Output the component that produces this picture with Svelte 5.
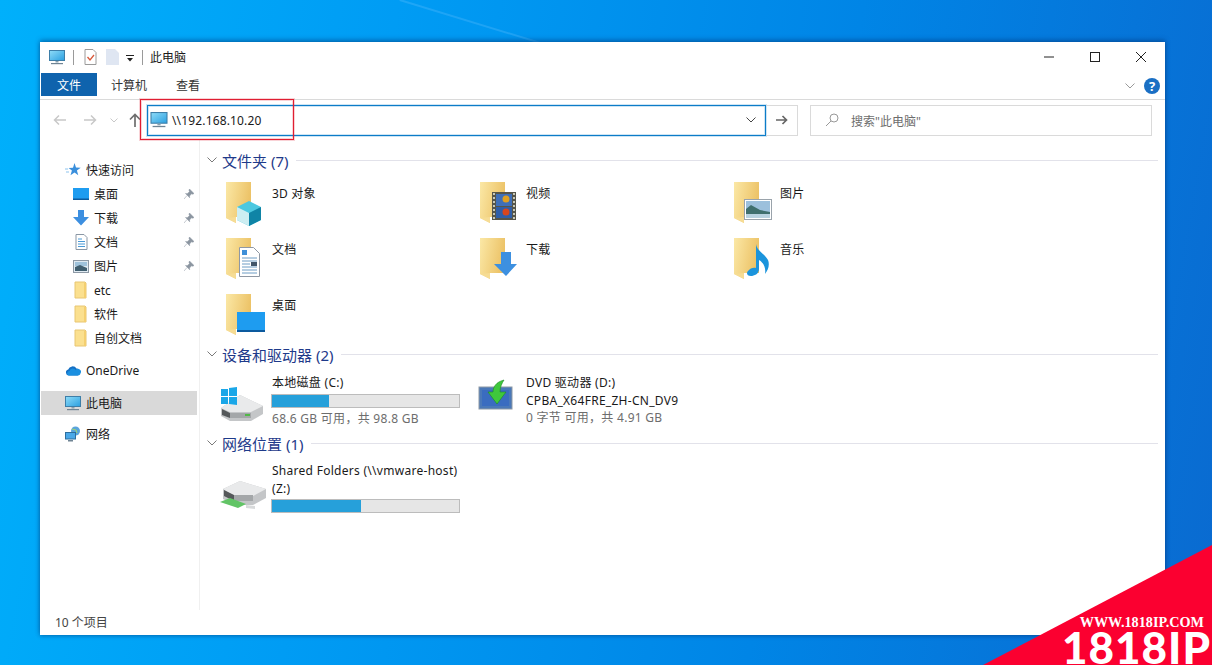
<script>
    const navItems = [
        { label: '快速访问', icon: 'star', cls: 'top' },
        { label: '桌面', icon: 'desk', cls: 'sub', pin: true },
        { label: '下载', icon: 'down', cls: 'sub', pin: true },
        { label: '文档', icon: 'doc', cls: 'sub', pin: true },
        { label: '图片', icon: 'pic', cls: 'sub', pin: true },
        { label: 'etc', icon: 'folder', cls: 'sub' },
        { label: '软件', icon: 'folder', cls: 'sub' },
        { label: '自创文档', icon: 'folder', cls: 'sub' },
        { label: 'OneDrive', icon: 'cloud', cls: 'top gap' },
        { label: '此电脑', icon: 'pc', cls: 'top gap selected' },
        { label: '网络', icon: 'net', cls: 'top gap' }
    ];

    const folders = [
        { label: '3D 对象', overlay: 'cube' },
        { label: '视频', overlay: 'film' },
        { label: '图片', overlay: 'photo' },
        { label: '文档', overlay: 'page' },
        { label: '下载', overlay: 'arrow' },
        { label: '音乐', overlay: 'note' },
        { label: '桌面', overlay: 'screen' }
    ];
</script>

{#snippet monitor(w, h)}
    <svg width={w} height={h} viewBox="0 0 16 15">
        <defs>
            <linearGradient id="scr" x1="0" y1="0" x2="1" y2="1">
                <stop offset="0" stop-color="#8fdcf8" />
                <stop offset="1" stop-color="#2a9fe0" />
            </linearGradient>
        </defs>
        <rect x="0.5" y="0.5" width="15" height="10" fill="url(#scr)" stroke="#3d7ea8" />
        <rect x="6.5" y="11" width="3" height="1.5" fill="#8aa0ae" />
        <rect x="2" y="13" width="12" height="1.2" fill="#6f8494" />
    </svg>
{/snippet}

{#snippet smallFolder()}
    <svg width="16" height="18" viewBox="0 0 16 18">
        <path d="M2 1h10l1 1v15H2z" fill="#fbe08f" stroke="#e8c672" stroke-width="1" />
        <path d="M11 2h2v15h-2z" fill="#f4cf70" />
    </svg>
{/snippet}

{#snippet navIcon(name)}
    {#if name === 'star'}
        <svg width="16" height="16" viewBox="0 0 16 16"><path d="M9.500 1l1.500 4.600 4.700.1-3.800 2.900 1.400 4.700-3.800-2.800-4 2.800 1.400-4.700L3.600 6l4.400-.3z" fill="#3a8fdc" /><path d="M0 7h3M1 10h3" stroke="#8cc3ee" /></svg>
    {:else if name === 'desk'}
        <svg width="16" height="14" viewBox="0 0 16 14"><rect width="16" height="12" y="1" fill="#1e9cf0" /><rect y="11.5" width="16" height="1.500" fill="#0c5a9e" /></svg>
    {:else if name === 'down'}
        <svg width="16" height="16" viewBox="0 0 16 16"><path d="M5 0h6v7h5l-8 8.500L0 7h5z" fill="#3d8fe0" /></svg>
    {:else if name === 'doc'}
        <svg width="13" height="16" viewBox="0 0 13 16"><path d="M1 .5h8l3 3v12H1z" fill="#fff" stroke="#8a97a5" /><path d="M3 5h4M3 7.500h7M3 10h7M3 12.500h7" stroke="#4b9ad6" /></svg>
    {:else if name === 'pic'}
        <svg width="16" height="13" viewBox="0 0 16 13"><rect x=".5" y=".5" width="15" height="12" fill="#dfeaf2" stroke="#8d99a5" /><path d="M2 2h12v4H2z" fill="#9fc3dc" /><path d="M2 7l5-2 7 3v3H2z" fill="#405f70" /></svg>
    {:else if name === 'folder'}
        {@render smallFolder()}
    {:else if name === 'cloud'}
        <svg width="16" height="11" viewBox="0 0 16 11"><path d="M4 10.500a3 3 0 0 1-.8-5.900A4.600 4.600 0 0 1 11.500 3.500 3.600 3.600 0 0 1 12.600 10.500z" fill="#1570c4" /><path d="M3.500 10.500a2.300 2.300 0 0 1 1-4.400 3.400 3.400 0 0 1 6.300-.8 2.700 2.700 0 0 1 4.700 3c0 1.200-1 2.200-2.500 2.200z" fill="#1b8fe0" /></svg>
    {:else if name === 'pc'}
        {@render monitor(16, 15)}
    {:else if name === 'net'}
        <svg width="16" height="16" viewBox="0 0 16 16"><circle cx="10.500" cy="5" r="4.500" fill="#5aa4dc" /><path d="M7 3l4 1 1 3" stroke="#9ed56e" fill="none" /><rect x=".5" y="6.500" width="10" height="6.500" fill="#4aa8e8" stroke="#2d6e9e" /><rect x="3" y="14" width="5" height="1.500" fill="#6f8494" /></svg>
    {/if}
{/snippet}

{#snippet bigFolder(overlay)}
    <svg class="foldericon" width="48" height="48" viewBox="0 0 48 48">
        <defs>
            <linearGradient id="fold" x1="0" y1="0" x2="1" y2="0.300">
                <stop offset="0" stop-color="#fbe8a6" />
                <stop offset="1" stop-color="#ecc266" />
            </linearGradient>
        </defs>
        <path d="M3 3h25v35H13v6L3 39z" fill="url(#fold)" />
        <path d="M3 39l10 5V38z" fill="#f6dc94" />
        {#if overlay === 'cube'}
            <path d="M14 28l12-6 12 6v13l-12 6-12-6z" fill="#4cc8e0" />
            <path d="M14 28l12 6v13l-12-6z" fill="#cdeef2" />
            <path d="M26 34l12-6v13l-12 6z" fill="#0f84a6" />
        {:else if overlay === 'film'}
            <rect x="15" y="13" width="24" height="28" fill="#55554a" />
            <rect x="19" y="15" width="16" height="12" fill="#3f6fb8" />
            <rect x="19" y="28" width="16" height="11" fill="#2f5ea8" />
            <circle cx="29" cy="20" r="3.500" fill="#e0a020" />
            <circle cx="29" cy="33" r="3.500" fill="#d8461e" />
            <path d="M17 14v26M37 14v26" stroke="#c8c8b8" stroke-width="2" stroke-dasharray="2 2" />
        {:else if overlay === 'photo'}
            <rect x="13.500" y="20.500" width="27" height="20" fill="#fff" stroke="#9aa3ab" />
            <rect x="15" y="22" width="24" height="17" fill="#9cc0dc" />
            <path d="M15 30l5-4 9 5 10 2v6H15z" fill="#3f6f6e" />
            <rect x="15" y="35" width="24" height="4" fill="#b8d2e0" />
        {:else if overlay === 'page'}
            <path d="M16.500 12.500h14l6 6v23h-20z" fill="#fff" stroke="#8f98a4" />
            <path d="M19 15h5v5h-5z" fill="#3d8fd8" />
            <path d="M19 23h15M19 26h15M19 29h8M19 32h15M19 35h15M19 38h15" stroke="#6d9cc4" />
            <rect x="28" y="27" width="6" height="4" fill="#42566a" />
        {:else if overlay === 'arrow'}
            <path d="M24 17h10v12h6L29 41 17 29h7z" fill="#3d90e0" />
        {:else if overlay === 'note'}
            <path d="M25 9c1 7 8 9 12 16 2 5 0 10-3 14 1-6-1-11-6-14v9c0 5-5 7-8 7-4 0-5-3-3-5 2-3 6-4 8-3z" fill="#1b94dc" />
        {:else if overlay === 'screen'}
            <rect x="14" y="21" width="28" height="20" fill="#1e9cf0" />
            <rect x="14" y="39" width="28" height="2" fill="#0c5a9e" />
        {/if}
    </svg>
{/snippet}

{#snippet sectionHead(title)}
    <div class="sechead">
        <svg width="10" height="6" viewBox="0 0 10 6"><path d="M.5.500L5 5 9.500.500" fill="none" stroke="#7a7a7a" /></svg>
        <span class="sectitle">{title}</span>
        <span class="secline"></span>
    </div>
{/snippet}

<div class="desktop">
    <div class="beam"></div>

    <div class="window">
        <div class="titlebar">
            <span class="tb-pc">{@render monitor(16, 15)}</span>
            <span class="tsep"></span>
            <svg class="tb-ic" width="13" height="16" viewBox="0 0 13 16"><path d="M1 .5h8l3 3v12H1z" fill="#fff" stroke="#9a9a9a" /><path d="M3.500 8l2.500 3 4-5" fill="none" stroke="#d8583a" stroke-width="1.300" /></svg>
            <svg class="tb-ic2" width="13" height="16" viewBox="0 0 13 16"><path d="M0 0h9l4 4v12H0z" fill="#dfe6f2" /></svg>
            <svg class="tb-dd" width="8" height="7" viewBox="0 0 8 7"><path d="M0 .5h8" stroke="#222" /><path d="M1 3h6L4 6.500z" fill="#222" /></svg>
            <span class="tsep"></span>
            <span class="wintitle">此电脑</span>
            <div class="winbtns">
                <svg width="12" height="12" viewBox="0 0 12 12"><path d="M1 6h10" stroke="#222" /></svg>
                <svg width="12" height="12" viewBox="0 0 12 12"><rect x="1.500" y="1.500" width="9" height="9" fill="none" stroke="#222" /></svg>
                <svg width="12" height="12" viewBox="0 0 12 12"><path d="M1 1l10 10M11 1L1 11" stroke="#222" /></svg>
            </div>
        </div>

        <div class="ribbon">
            <span class="tab file">文件</span>
            <span class="tab">计算机</span>
            <span class="tab view">查看</span>
            <div class="ribright">
                <svg width="10" height="6" viewBox="0 0 10 6"><path d="M.5.500L5 5 9.500.500" fill="none" stroke="#999" /></svg>
                <span class="help">?</span>
            </div>
        </div>

        <div class="addrrow">
            <div class="navbtns">
                <svg width="14" height="12" viewBox="0 0 14 12"><path d="M13 6H2M6 1.500L1.500 6 6 10.500" fill="none" stroke="#c8c8c8" stroke-width="1.500" /></svg>
                <svg width="14" height="12" viewBox="0 0 14 12"><path d="M1 6h11M8 1.500L12.500 6 8 10.500" fill="none" stroke="#c8c8c8" stroke-width="1.500" /></svg>
                <svg width="8" height="5" viewBox="0 0 8 5"><path d="M.5.500L4 4 7.500.500" fill="none" stroke="#c8c8c8" /></svg>
                <svg width="12" height="14" viewBox="0 0 12 14"><path d="M6 14V2M1 6.500L6 1.500l5 5" fill="none" stroke="#6e6e6e" stroke-width="1.700" /></svg>
            </div>
            <div class="addr">
                <span class="addr-pc">{@render monitor(18, 16)}</span>
                <span class="addr-text">\\192.168.10.20</span>
                <svg class="addr-dd" width="10" height="6" viewBox="0 0 10 6"><path d="M.5.500L5 5 9.500.500" fill="none" stroke="#444" /></svg>
            </div>
            <div class="go">
                <svg width="12" height="10" viewBox="0 0 12 10"><path d="M0 5h10M6.500 1L10.500 5 6.500 9" fill="none" stroke="#666" stroke-width="1.700" /></svg>
            </div>
            <div class="search">
                <svg width="14" height="14" viewBox="0 0 14 14"><circle cx="9" cy="5" r="4" fill="none" stroke="#999" /><path d="M6 8l-5 5" stroke="#999" /></svg>
                <span class="searchtext">搜索"此电脑"</span>
            </div>
        </div>

        <div class="main">
            <nav class="navpane">
                {#each navItems as item}
                    <div class="navrow {item.cls}">
                        <span class="navicon">{@render navIcon(item.icon)}</span>
                        <span class="navlabel">{item.label}</span>
                        {#if item.pin}
                            <svg class="pin" width="10" height="10" viewBox="0 0 10 10"><path d="M5.500 0L10 4.500 8.800 5.200 7.500 4.800 5.500 7l.2 1.800L1.500 4.500l1.700.2 2.300-2L5 1.300zM3 6.500L0 10" fill="#8b95a0" stroke="#8b95a0" stroke-width=".5" /></svg>
                        {/if}
                    </div>
                {/each}
            </nav>

            <div class="content">
                {@render sectionHead('文件夹 (7)')}
                <div class="tiles folders">
                    {#each folders as f}
                        <div class="tile">
                            {@render bigFolder(f.overlay)}
                            <span class="tilelabel">{f.label}</span>
                        </div>
                    {/each}
                </div>

                {@render sectionHead('设备和驱动器 (2)')}
                <div class="tiles drives">
                    <div class="tile">
                        <svg class="driveicon" width="48" height="48" viewBox="0 0 48 48">
                            <path d="M3 34l19-13 23 11v8L33 47H12L3 42z" fill="#c4c6c8" />
                            <path d="M3 34l19-13 23 11-12 6H12z" fill="#e9eaeb" />
                            <path d="M4 35l8 4v5l-8-3z" fill="#55585a" />
                            <path d="M12 39h21v5H12z" fill="#a4a7a9" />
                            <rect x="27" y="40" width="5" height="2" fill="#52b848" />
                            <path d="M3 15h7v7H3zM11 14l8-1v9h-8zM3 23h7v7H3zM11 23h8v8l-8-1z" fill="#1aa7e8" />
                        </svg>
                        <div class="driveinfo">
                            <div class="dline">本地磁盘 (C:)</div>
                            <div class="bar"><div class="fill" style="width: 30.5%"></div></div>
                            <div class="dline muted">68.6 GB 可用，共 98.8 GB</div>
                        </div>
                    </div>
                    <div class="tile">
                        <svg class="foldericon" width="48" height="48" viewBox="0 0 48 48">
                            <rect x="2" y="13" width="33" height="22" fill="#4a78b8" stroke="#8d99a5" />
                            <rect x="5" y="16" width="27" height="16" fill="#3a6cc0" />
                            <path d="M27 6c-8 2-11 7-11 12h-5l9 12 9-12h-6c0-5 2-9 4-12z" fill="#3fc83c" stroke="#1c8a24" stroke-width=".6" />
                        </svg>
                        <div class="driveinfo">
                            <div class="dline">DVD 驱动器 (D:)</div>
                            <div class="dline">CPBA_X64FRE_ZH-CN_DV9</div>
                            <div class="dline muted">0 字节 可用，共 4.91 GB</div>
                        </div>
                    </div>
                </div>

                {@render sectionHead('网络位置 (1)')}
                <div class="tiles network">
                    <div class="tile wide">
                        <svg class="driveicon" width="48" height="48" viewBox="0 0 48 48">
                            <path d="M5 27l17-8 26 8v9L35 43H16L5 37z" fill="#c4c6c8" />
                            <path d="M5 27l17-8 26 8-13 7H16z" fill="#e9eaeb" />
                            <path d="M6 28l10 5v6L6 34z" fill="#55585a" />
                            <path d="M16 33h19v6H16z" fill="#a4a7a9" />
                            <path d="M2 40l10-4 16 6-8 4z" fill="#62c466" />
                            <path d="M28 43l9 1v3l-9-1z" fill="#d8dadb" />
                        </svg>
                        <div class="driveinfo">
                            <div class="dline">Shared Folders (\\vmware-host)</div>
                            <div class="dline">(Z:)</div>
                            <div class="bar close"><div class="fill" style="width: 47.5%"></div></div>
                        </div>
                    </div>
                </div>
            </div>
        </div>

        <div class="status">10 个项目</div>

        <div class="redbox"></div>
    </div>

    <div class="corner"></div>
    <div class="markurl">WWW.1818IP.COM</div>
    <div class="markname">1818IP</div>
</div>

<style>
    :global(body) {
        margin: 0;
        overflow: hidden;
    }

    .desktop {
        position: relative;
        width: 1212px;
        height: 665px;
        overflow: hidden;
        background: linear-gradient(100deg, #00b0fb 0%, #009cf4 30%, #0085e6 65%, #0a6ad0 100%);
        font-family: "Noto Sans", "Noto Sans CJK SC", sans-serif;
        font-size: 12px;
        color: #1a1a1a;
    }

    .beam {
        position: absolute;
        left: 400px;
        top: -1px;
        width: 160px;
        height: 2px;
        background: rgba(120, 200, 255, 0.25);
        transform-origin: left top;
        transform: rotate(17deg);
    }

    .window {
        position: absolute;
        left: 40px;
        top: 42px;
        width: 1125px;
        height: 593px;
        background: #fff;
        display: flex;
        flex-direction: column;
        box-shadow: 0 -2px 5px rgba(0, 50, 110, 0.45), 0 1px 4px rgba(0, 50, 110, 0.4);
    }

    .titlebar {
        height: 30px;
        display: flex;
        align-items: center;
        padding-left: 9px;
        flex: none;
    }

    .tb-pc {
        display: flex;
        margin-right: 8px;
    }

    .tsep {
        width: 1px;
        height: 15px;
        background: #9a9a9a;
    }

    .tb-ic {
        margin-left: 10px;
    }

    .tb-ic2 {
        margin-left: 9px;
    }

    .tb-dd {
        margin-left: 7px;
        margin-right: 8px;
        margin-top: 3px;
    }

    .wintitle {
        margin-left: 7px;
    }

    .winbtns {
        margin-left: auto;
        display: flex;
        gap: 34px;
        padding-right: 18px;
    }

    .ribbon {
        height: 27px;
        flex: none;
        display: flex;
        align-items: flex-start;
        border-bottom: 1px solid #dadada;
        padding-left: 1px;
    }

    .tab {
        height: 23px;
        line-height: 25px;
        padding: 0 14px;
        margin-top: 1px;
        color: #333;
    }

    .tab.view {
        margin-left: 1px;
    }

    .tab.file {
        width: 56px;
        box-sizing: border-box;
        text-align: center;
        background: #0f63ad;
        color: #fff;
        padding: 0;
    }

    .ribright {
        margin-left: auto;
        display: flex;
        align-items: center;
        gap: 9px;
        padding-right: 5px;
        padding-top: 6px;
    }

    .help {
        width: 16px;
        height: 16px;
        border-radius: 50%;
        background: #1a6fc4;
        color: #fff;
        font-weight: 700;
        font-size: 13px;
        line-height: 16px;
        text-align: center;
    }

    .addrrow {
        height: 40px;
        flex: none;
        display: flex;
        align-items: center;
    }

    .navbtns {
        width: 107px;
        flex: none;
        display: flex;
        align-items: center;
        padding-left: 13px;
        box-sizing: border-box;
    }

    .navbtns svg:nth-child(1) {
        margin-right: 16px;
    }

    .navbtns svg:nth-child(2) {
        margin-right: 13px;
    }

    .navbtns svg:nth-child(3) {
        margin-right: 11px;
    }

    .addr {
        width: 619px;
        height: 31px;
        box-sizing: border-box;
        border: 1px solid #0c7cc8;
        box-shadow: 0 0 0 1px rgba(12, 124, 200, 0.2), inset 0 0 0 1px rgba(12, 124, 200, 0.2);
        display: flex;
        align-items: center;
        padding-left: 2px;
        flex: none;
    }

    .addr-pc {
        display: flex;
        margin-right: 4px;
    }

    .addr-text {
        letter-spacing: 0.15px;
    }

    .addr-dd {
        margin-left: auto;
        margin-right: 9px;
    }

    .go {
        width: 32px;
        height: 31px;
        box-sizing: border-box;
        border: 1px solid #dadada;
        border-left: 0;
        display: flex;
        align-items: center;
        justify-content: center;
        flex: none;
    }

    .search {
        margin-left: 12px;
        width: 342px;
        height: 31px;
        box-sizing: border-box;
        border: 1px solid #dadada;
        display: flex;
        align-items: center;
        gap: 12px;
        padding-left: 14px;
        color: #6d6d6d;
        flex: none;
    }

    .searchtext {
        padding-top: 1px;
    }

    .main {
        flex: 1;
        display: flex;
        min-height: 0;
    }

    .navpane {
        width: 160px;
        flex: none;
        box-sizing: border-box;
        border-right: 1px solid #f0f0f0;
        padding-top: 18px;
    }

    .navrow {
        height: 24px;
        display: flex;
        align-items: center;
        margin-left: 1px;
        margin-right: 2px;
    }

    .navrow.gap {
        margin-top: 8px;
    }

    .navrow.selected {
        background: #d9d9d9;
        margin-top: 9px;
        margin-bottom: -1px;
    }

    .navicon {
        width: 16px;
        display: flex;
        justify-content: center;
        align-items: center;
        margin-right: 5px;
    }

    .navrow.top {
        padding-left: 24px;
    }

    .navrow.sub {
        padding-left: 32px;
    }

    .pin {
        margin-left: auto;
        margin-right: 3px;
    }

    .content {
        flex: 1;
        padding: 11px 7px 0 7px;
        min-width: 0;
    }

    .sechead {
        height: 18px;
        display: flex;
        align-items: center;
    }

    .sechead svg {
        margin-right: 5px;
        flex: none;
    }

    .sectitle {
        font-size: 15px;
        color: #1e3a8a;
        white-space: nowrap;
    }

    .secline {
        flex: 1;
        height: 1px;
        background: #e2e2ea;
        margin-left: 8px;
    }

    .tiles {
        display: grid;
        grid-template-columns: repeat(3, 254px);
    }

    .tiles.folders {
        margin-top: 10px;
        margin-bottom: -2px;
    }

    .tiles.drives {
        margin-top: 11px;
        margin-bottom: 4px;
    }

    .tiles.network {
        margin-top: 10px;
    }

    .tile {
        height: 56px;
        display: flex;
        align-items: flex-start;
        padding-left: 16px;
        box-sizing: border-box;
    }

    .tile.wide {
        grid-column: span 2;
    }

    .foldericon {
        flex: none;
        margin-right: 1px;
    }

    .driveicon {
        flex: none;
        margin-left: -5px;
        margin-right: 6px;
    }

    .tilelabel {
        margin-top: 6px;
        line-height: 18px;
        letter-spacing: 0.2px;
    }

    .driveinfo {
        width: 190px;
        white-space: nowrap;
    }

    .dline {
        line-height: 17.5px;
        letter-spacing: 0.28px;
    }

    .muted {
        color: #6d6d6d;
    }

    .bar {
        width: 189px;
        height: 14px;
        box-sizing: border-box;
        background: #e6e6e6;
        border: 1px solid #bcbcbc;
        margin: 2px 0 2px -1px;
    }

    .fill {
        height: 100%;
        background: #26a0da;
    }

    .status {
        height: 25px;
        flex: none;
        line-height: 25px;
        padding-left: 15px;
        color: #444;
    }

    .redbox {
        position: absolute;
        left: 100px;
        top: 57px;
        width: 152px;
        height: 39px;
        border: 1px solid #e01e32;
        box-shadow: 0 0 0 1px rgba(224, 30, 50, 0.2), inset 0 0 0 1px rgba(224, 30, 50, 0.2);
    }

    .corner {
        position: absolute;
        left: 983px;
        top: 545px;
        width: 229px;
        height: 120px;
        background: #fb0030;
        clip-path: polygon(0 100%, 100% 0, 100% 100%);
    }

    .markurl {
        position: absolute;
        right: 8px;
        top: 615px;
        color: #fff;
        font-family: "Liberation Serif", serif;
        font-weight: 700;
        font-size: 14.2px;
        line-height: 14px;
    }

    .markname {
        position: absolute;
        right: 1px;
        top: 631px;
        color: #fff;
        font-family: "Lato", "Liberation Sans", sans-serif;
        font-weight: 900;
        font-size: 44px;
        line-height: 32px;
        letter-spacing: 1px;
    }
</style>
